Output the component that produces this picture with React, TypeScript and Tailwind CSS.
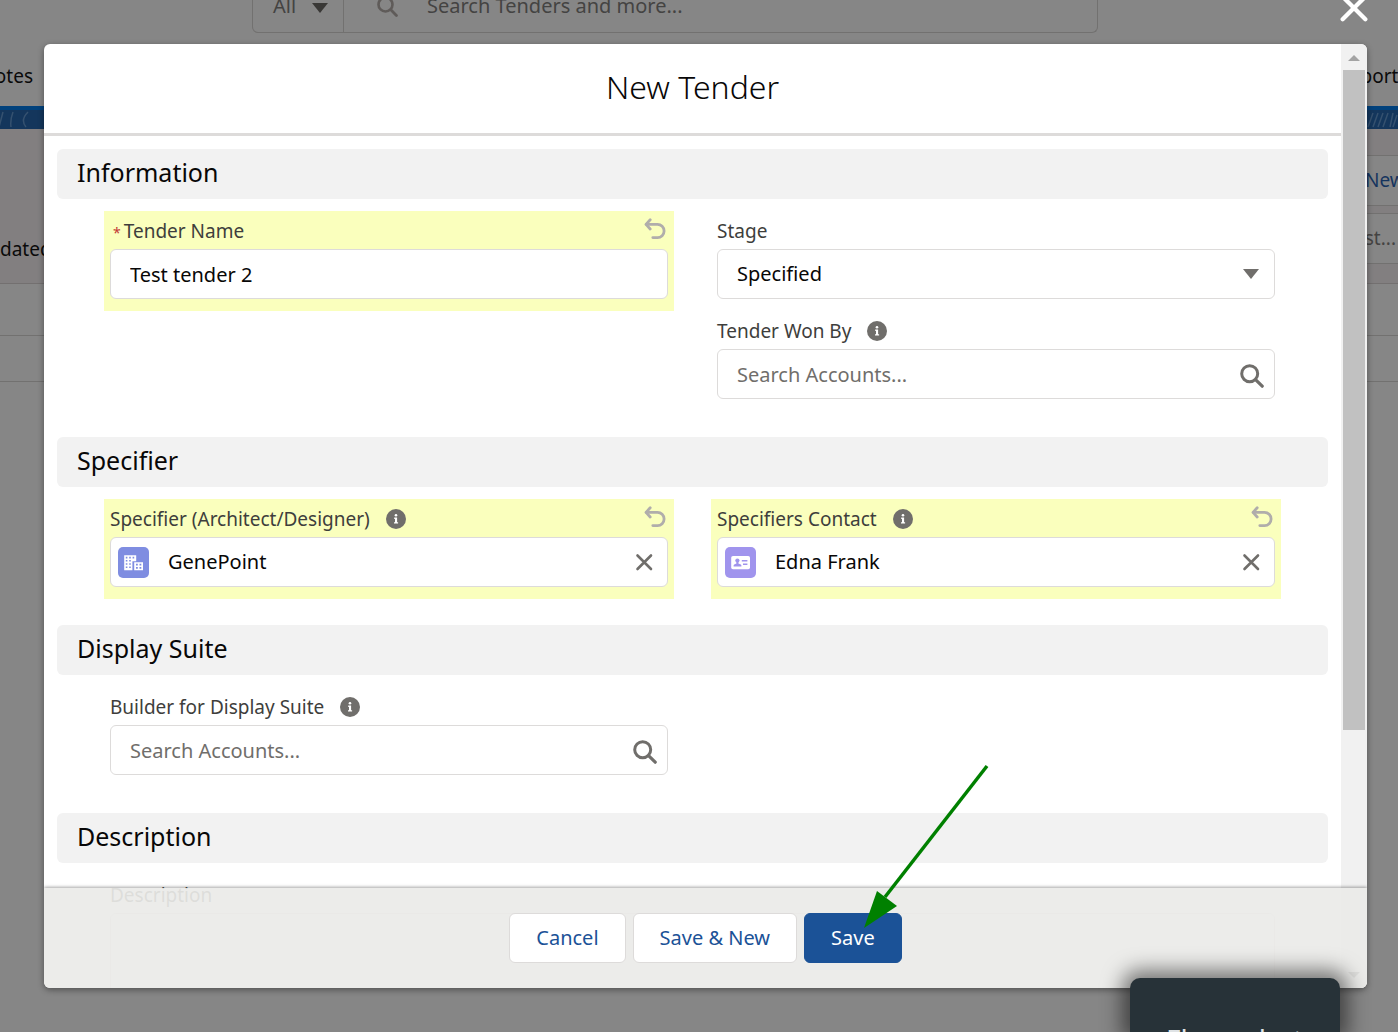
import { useState, type ReactNode } from "react";

const inputClass =
  "w-full h-[50px] rounded-md border border-[#dddbda] bg-white px-[19px] text-[20px] text-[#080707] placeholder-[#706e6b] outline-none";

function SearchIcon({ className }: { className: string }) {
  return (
    <svg viewBox="0 0 24 24" className={className} fill="none" stroke="currentColor" strokeLinecap="round">
      <circle cx="9.7" cy="9.7" r="8" strokeWidth="3" />
      <path d="M15.8 15.8l6.4 6.4" strokeWidth="3.2" />
    </svg>
  );
}

function CloseIcon({ className }: { className: string }) {
  return (
    <svg viewBox="0 0 24 24" className={className} fill="none" stroke="currentColor" strokeLinecap="round">
      <path d="M3.5 3.5l17 17M20.5 3.5l-17 17" strokeWidth="3.2" />
    </svg>
  );
}

function UndoIcon() {
  return (
    <svg viewBox="0 0 22 22" className="w-[22px] h-[22px]" fill="none" stroke="currentColor" strokeWidth="2.8" strokeLinecap="round" strokeLinejoin="round">
      <path d="M6.2 1.8L2 6.4l4.2 4.6" />
      <path d="M2.5 6.4h11a6.6 6.6 0 0 1 0 13.2H8.8" />
    </svg>
  );
}

function InfoIcon() {
  return (
    <svg viewBox="0 0 20 20" className="w-5 h-5">
      <circle cx="10" cy="10" r="10" fill="#706e6b" />
      <circle cx="10" cy="6.2" r="1.3" fill="#fff" />
      <path d="M8.2 8.6h2.9v4.6h1v1.3H8v-1.3h1V9.9h-.8z" fill="#fff" />
    </svg>
  );
}

function AccountIcon() {
  return (
    <svg viewBox="0 0 31 31" className="w-[31px] h-[31px]">
      <rect width="31" height="31" rx="5" fill="#7f8de1" />
      <path d="M6.2 8.2h12v6h-3.8v9H6.2zM16.2 15.2h8.8v8h-8.8z" fill="#fff" />
      <path
        d="M7.8 9.8h1.6v1.6H7.8zM11.2 9.8h1.6v1.6h-1.6zM14.6 9.8h1.6v1.6h-1.6zM7.8 13h1.6v1.6H7.8zM11.2 13h1.6v1.6h-1.6zM7.8 16.2h1.6v1.6H7.8zM11.2 16.2h1.6v1.6h-1.6zM7.8 19.4h1.6V21H7.8zM11.2 19.4h1.6V21h-1.6zM18 16.7h1.8v1.8H18zM21.5 16.7h1.8v1.8h-1.8zM18 20h1.8v1.8H18zM21.5 20h1.8v1.8h-1.8z"
        fill="#7f8de1"
      />
    </svg>
  );
}

function ContactIcon() {
  return (
    <svg viewBox="0 0 31 31" className="w-[31px] h-[31px]">
      <rect width="31" height="31" rx="5" fill="#a094ed" />
      <rect x="6.2" y="9" width="18.8" height="13.2" rx="1.8" fill="#fff" />
      <circle cx="12.4" cy="13.6" r="2.1" fill="#a094ed" />
      <path d="M11.4 15h2v1.4l2.4 1.2q.6.3.6 1v1H8.6v-1q0-.7.6-1l2.2-1.2z" fill="#a094ed" />
      <path d="M16.8 13h5.6v1.5h-5.6zM18 16.4h4.4v1.5H18z" fill="#a094ed" />
    </svg>
  );
}

type FieldProps = {
  id: string;
  label: string;
  required?: boolean;
  info?: boolean;
  edited?: boolean;
  children: ReactNode;
};

function Field({ id, label, required, info, edited, children }: FieldProps) {
  return (
    <div className={edited ? "px-1.5 pb-3 bg-[#faffbd]" : "px-1.5 pb-3"}>
      <div className="flex items-center h-[38px] pt-0.5">
        <label htmlFor={id} className="text-[19px] leading-6 text-[#3e3e3c]">
          {required && <span className="ml-[3px] mr-[3px] text-sm text-[#c23934]">*</span>}
          {label}
        </label>
        {info && (
          <button type="button" aria-label={`Help ${label}`} className="ml-4">
            <InfoIcon />
          </button>
        )}
        {edited && (
          <button type="button" aria-label={`Undo ${label}`} className="ml-auto mr-0.5 mb-1 text-[#b0adab]">
            <UndoIcon />
          </button>
        )}
      </div>
      {children}
    </div>
  );
}

function LookupSearch({ id }: { id: string }) {
  return (
    <div className="relative">
      <input id={id} type="text" placeholder="Search Accounts..." className={inputClass} />
      <SearchIcon className="absolute right-[11px] top-[15px] w-6 h-6 text-[#706e6b]" />
    </div>
  );
}

function LookupValue({ id, value, icon }: { id: string; value: string; icon: ReactNode }) {
  return (
    <div className="flex items-center h-[50px] rounded-md border border-[#dddbda] bg-white pl-[7px] pr-3">
      {icon}
      <input id={id} type="text" defaultValue={value} className="flex-1 min-w-0 ml-[19px] text-[20px] text-[#080707] outline-none" />
      <button type="button" aria-label={`Clear ${value}`} className="text-[#706e6b]">
        <svg viewBox="0 0 22 22" className="w-[22px] h-[22px]" fill="none" stroke="currentColor" strokeWidth="2.6" strokeLinecap="round">
          <path d="M4.5 4.5l13.5 13.5M18 4.5L4.5 18" />
        </svg>
      </button>
    </div>
  );
}

function Section({ title, children }: { title: string; children: ReactNode }) {
  return (
    <section className="mb-[26px]">
      <h2 className="flex items-center h-[50px] rounded-md bg-[#f2f2f2] px-5 pb-0.5 text-[25px] text-[#080707]">{title}</h2>
      <div className="grid grid-cols-2 gap-x-[37px] px-[47px] pt-3">{children}</div>
    </section>
  );
}

// Page behind the dialog, in its dimmed colours
function PageBehind() {
  return (
    <div className="min-h-screen bg-[#868686]">
      <div className="flex h-[33px] ml-[252px] mr-[300px] rounded-b-md border border-t-0 border-[#727170]">
        <button type="button" className="flex items-center gap-4 w-[91px] h-8 pl-5 pb-5 border-r border-[#727170] text-[20px] leading-7 text-[#444342]">
          All
          <svg viewBox="0 0 16 10" className="w-4 h-2.5 mt-1" fill="#393836">
            <path d="M0 0h16L8 10z" />
          </svg>
        </button>
        <div className="flex flex-1 h-8 pb-5 items-center">
          <SearchIcon className="w-[21px] h-[21px] ml-[33px] mr-[29px] text-[#5f5b59]" />
          <input
            type="text"
            aria-label="Search Tenders and more"
            placeholder="Search Tenders and more..."
            className="flex-1 text-[20px] placeholder-[#444342] outline-none"
          />
        </div>
      </div>
      <nav className="flex justify-between items-center h-[73px] pt-3.5 text-[19px] text-[#0a0a0a]">
        <a href="#notes" className="flex justify-end w-[33px]">Notes</a>
        <a href="#reports" className="w-[60px]">Reports</a>
      </nav>
      <div className="h-1 bg-[#00417c]" />
      <div className="flex justify-between h-[19px] bg-[#14365c] text-[#35516f]">
        <svg viewBox="0 0 44 19" className="w-11" fill="none" stroke="currentColor" strokeWidth="1.5">
          <path d="M3 2L-1 17M13 2q-3 8-2 15M28 2q-8 8-2 15" />
        </svg>
        <svg viewBox="0 0 32 19" className="w-8" fill="none" stroke="currentColor" strokeWidth="1.5">
          <path d="M7 3L2 17M12 3L7 17M17 3l-5 14M22 3l-5 14M27 3l-3 14M31 5l-4 12" />
        </svg>
      </div>
      <div className="flex flex-col h-[155px] border-b border-[#737070] bg-[#827f80] text-[19px]">
        <div className="flex justify-end mt-[26px]">
          <button type="button" className="w-[98px] h-[51px] border-y border-[#727170] bg-[#868686] pl-[65px] text-left text-[#15345e]">
            New
          </button>
        </div>
        <div className="flex justify-between mt-[7px]">
          <span className="pt-[22px] leading-7 text-[#0a0a0a]">dated</span>
          <span className="w-[98px] h-[51px] border-y border-[#727170] bg-[#868686] pt-2.5 pr-0.5 leading-7 text-right text-[#444342]">
            list...
          </span>
        </div>
      </div>
      <div className="h-[52px] border-b border-[#727170]" />
      <div className="h-[46px] border-b border-[#727170]" />
    </div>
  );
}

// Scroll track with its arrows
function ScrollTrack() {
  return (
    <div className="flex flex-col items-center w-[26px] shrink-0 bg-[#f1f1f1]">
      <div className="flex items-center justify-center h-[26px] shrink-0">
        <svg viewBox="0 0 12 6" className="w-3 h-1.5 mt-0.5" fill="#a3a3a3">
          <path d="M0 6h12L6 0z" />
        </svg>
      </div>
      <div className="flex-1 w-[22px]">
        <div className="h-[74%] bg-[#c1c1c1]" />
      </div>
      <div className="flex items-center justify-center h-[26px] shrink-0">
        <svg viewBox="0 0 12 6" className="w-3 h-1.5" fill="#505050">
          <path d="M0 0h12L6 6z" />
        </svg>
      </div>
    </div>
  );
}

export default function App() {
  const [stage, setStage] = useState("Specified");

  return (
    <div className="relative h-screen overflow-hidden font-['Noto_Sans',sans-serif]">
      <PageBehind />

      <div className="absolute inset-0 flex pt-11 pb-11 pl-11 pr-[31px]">
        <button type="button" aria-label="Close" className="absolute right-[28px] -top-2 text-white">
          <CloseIcon className="w-8 h-8" />
        </button>

        <form
          role="dialog"
          aria-label="New Tender"
          className="relative flex flex-1 min-w-0 rounded-md bg-white overflow-hidden shadow-[0_2px_6px_rgba(0,0,0,0.4)]"
          onSubmit={(e) => e.preventDefault()}
        >
          <div className="flex-1 min-w-0 overflow-hidden">
            <header className="flex items-center justify-center h-[92px] pb-1 border-b-[3px] border-[#dddbda]">
              <h1 className="text-[32px] font-light text-[#080707]">New Tender</h1>
            </header>

            <div className="p-[13px]">
              <Section title="Information">
                <Field id="tender-name" label="Tender Name" required edited>
                  <input id="tender-name" type="text" defaultValue="Test tender 2" className={inputClass} />
                </Field>
                <Field id="stage" label="Stage">
                  <div className="relative">
                    <select id="stage" value={stage} onChange={(e) => setStage(e.target.value)} className={`${inputClass} appearance-none`}>
                      <option>Specified</option>
                    </select>
                    <svg viewBox="0 0 16 10" className="absolute right-4 top-5 w-4 h-2.5 pointer-events-none" fill="#706e6b">
                      <path d="M0 0h16L8 10z" />
                    </svg>
                  </div>
                </Field>
                <div />
                <Field id="won-by" label="Tender Won By" info>
                  <LookupSearch id="won-by" />
                </Field>
              </Section>

              <Section title="Specifier">
                <Field id="specifier" label="Specifier (Architect/Designer)" info edited>
                  <LookupValue id="specifier" value="GenePoint" icon={<AccountIcon />} />
                </Field>
                <Field id="contact" label="Specifiers Contact" info edited>
                  <LookupValue id="contact" value="Edna Frank" icon={<ContactIcon />} />
                </Field>
              </Section>

              <Section title="Display Suite">
                <Field id="builder" label="Builder for Display Suite" info>
                  <LookupSearch id="builder" />
                </Field>
              </Section>

              <Section title="Description">
                <div className="col-span-2">
                  <Field id="description" label="Description">
                    <textarea id="description" className="block w-full h-40 rounded-md border border-[#dddbda] p-4 text-[20px] outline-none" />
                  </Field>
                </div>
              </Section>
            </div>
          </div>

          <ScrollTrack />

          <footer className="absolute inset-x-0 bottom-0 flex justify-center gap-[7px] py-[25px] bg-[#eaeae8]/92 shadow-[0_-1px_3px_rgba(0,0,0,0.35)] text-[20px]">
            <button type="button" className="h-[50px] px-[26px] rounded-md border border-[#dddbda] bg-white text-[#1b5297]">Cancel</button>
            <button type="button" className="h-[50px] px-[26px] rounded-md border border-[#dddbda] bg-white text-[#1b5297]">Save &amp; New</button>
            <button type="submit" className="h-[50px] px-[26px] rounded-md border border-[#1b5297] bg-[#1b5297] text-white">Save</button>
          </footer>
        </form>
      </div>

      {/* Arrow pointing at Save */}
      <svg viewBox="0 0 126 164" className="absolute left-1/2 bottom-[104px] ml-[164px] w-[126px] h-[164px] pointer-events-none" fill="#008000">
        <path d="M124 2L22 133" stroke="#008000" strokeWidth="3.5" />
        <path d="M1 164L14 127L34 142z" />
      </svg>

      {/* Screenshot tool notification */}
      <div className="absolute right-[58px] bottom-0 w-[210px] h-[54px] rounded-t-[10px] bg-[#273238] pl-9 pt-10 text-[28px] text-[#dfe3e5] shadow-[0_0_20px_8px_rgba(0,0,0,0.5)]">
        Flameshot
      </div>
    </div>
  );
}
